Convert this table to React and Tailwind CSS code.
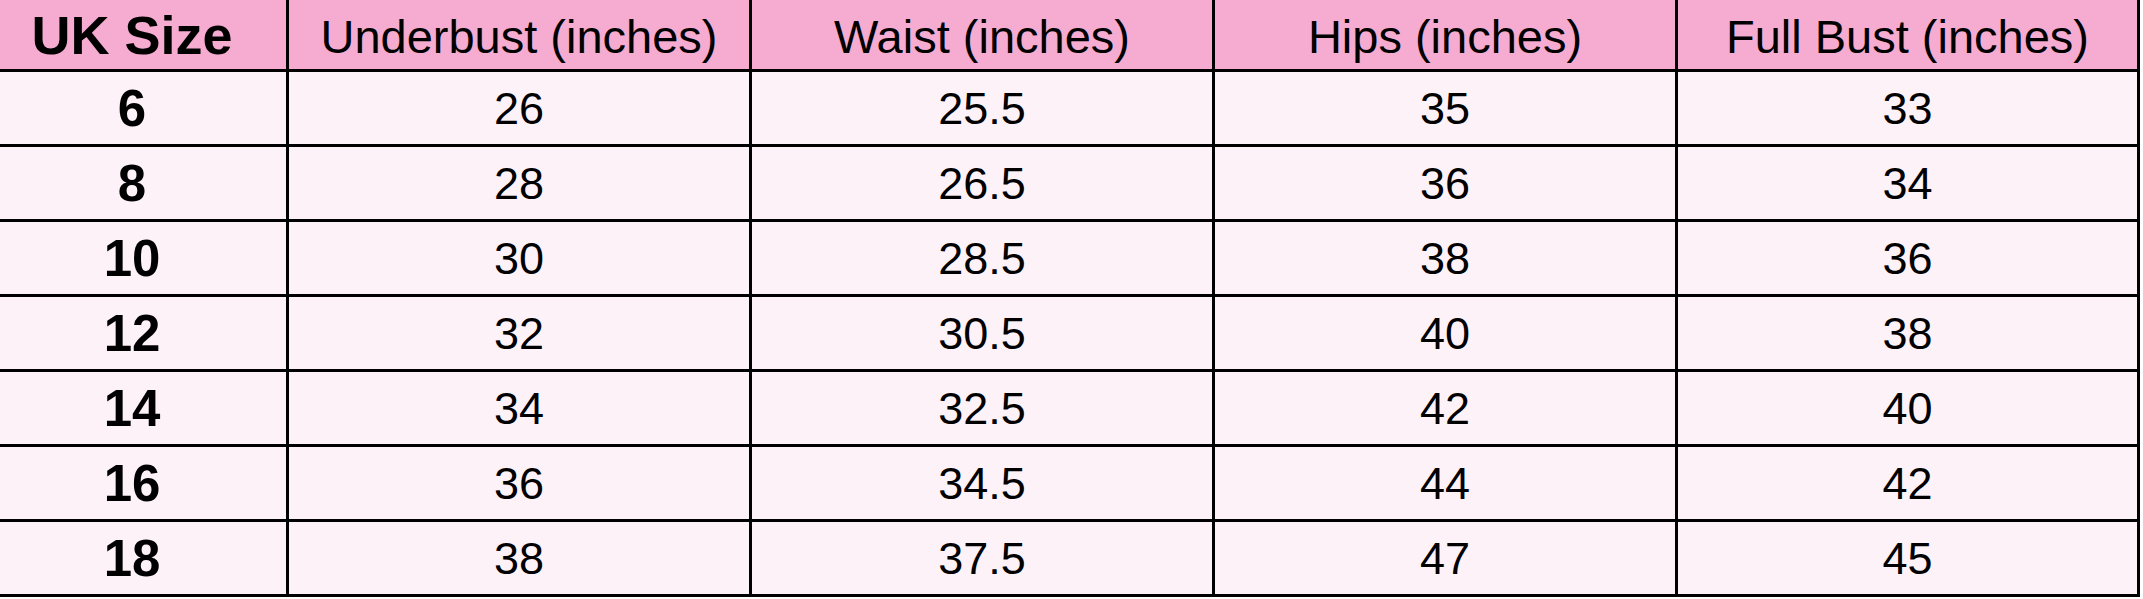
import React from "react";

const headers = [
  "UK Size",
  "Underbust (inches)",
  "Waist (inches)",
  "Hips (inches)",
  "Full Bust (inches)",
];

const rows = [
  ["6", "26", "25.5", "35", "33"],
  ["8", "28", "26.5", "36", "34"],
  ["10", "30", "28.5", "38", "36"],
  ["12", "32", "30.5", "40", "38"],
  ["14", "34", "32.5", "42", "40"],
  ["16", "36", "34.5", "44", "42"],
  ["18", "38", "37.5", "47", "45"],
];

const HeaderCell = ({ text, first }) => (
  <div
    className={`h-[72px] flex items-center justify-center bg-[#f6abd1] border-r-[3px] border-b-[3px] border-black text-black leading-none ${
      first ? "text-[54px] font-bold pr-[22px]" : "text-[47px] pt-[4px]"
    }`}
  >
    <span>{text}</span>
  </div>
);

const BodyCell = ({ text, first }) => (
  <div
    className={`h-[75px] flex items-center justify-center bg-[#fef2f9] border-r-[3px] border-b-[3px] border-black text-black leading-none ${
      first ? "text-[51px] font-bold pr-[22px]" : "text-[45px]"
    }`}
  >
    <span>{text}</span>
  </div>
);

export default function App() {
  return (
    <div className="w-[2143px] h-[599px] bg-white font-['Liberation_Sans',Arial,sans-serif]">
      <div className="grid grid-cols-[289px_463px_463px_463px_462px] w-[2140px]">
        {headers.map((h, i) => (
          <HeaderCell key={h} text={h} first={i === 0} />
        ))}
        {rows.map((row) =>
          row.map((v, i) => (
            <BodyCell key={row[0] + "-" + i} text={v} first={i === 0} />
          ))
        )}
      </div>
    </div>
  );
}
